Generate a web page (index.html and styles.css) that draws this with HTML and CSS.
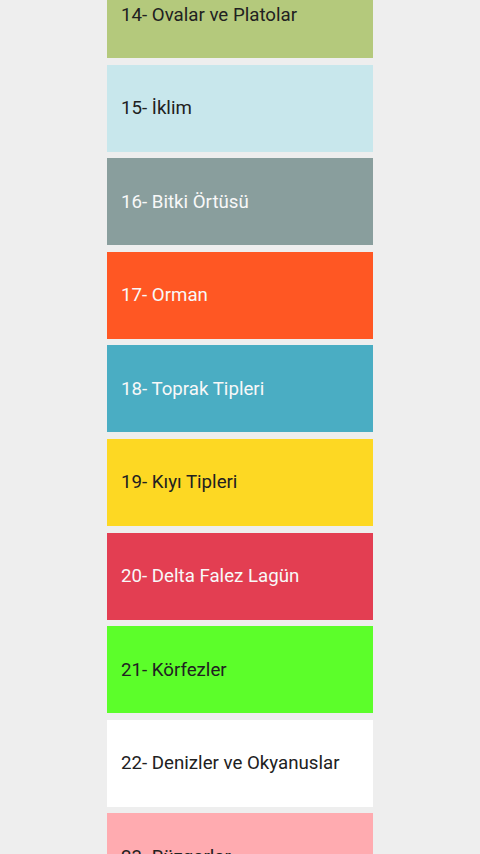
FILE: index.html
```html
<!DOCTYPE html>
<html lang="tr">
<head>
<meta charset="utf-8">
<title>Konular</title>
<link rel="stylesheet" href="styles.css">
</head>
<body>
<div class="list">
  <div class="card c14 dark">14- Ovalar ve Platolar</div>
  <div class="card c15 dark">15- İklim</div>
  <div class="card c16 light">16- Bitki Örtüsü</div>
  <div class="card c17 light">17- Orman</div>
  <div class="card c18 light">18- Toprak Tipleri</div>
  <div class="card c19 dark">19- Kıyı Tipleri</div>
  <div class="card c20 light">20- Delta Falez Lagün</div>
  <div class="card c21 dark">21- Körfezler</div>
  <div class="card c22 dark">22- Denizler ve Okyanuslar</div>
  <div class="card c23 dark">23- Rüzgarlar</div>
</div>
</body>
</html>
```

FILE: styles.css
```css
html, body {
  margin: 0;
  padding: 0;
  background: #eeeeee;
  height: 854px;
  overflow: hidden;
}
.list {
  display: flex;
  flex-direction: column;
  gap: 6.6px;
  width: 266px;
  margin: -29px auto 0 107px;
}
.card {
  height: 87px;
  flex: none;
  display: flex;
  align-items: center;
  padding-left: 14px;
  font-family: Roboto, "Noto Sans", sans-serif;
  font-size: 18.7px;
  box-sizing: border-box;
}
.dark { color: #212121; }
.light { color: #f8f8f8; }
.c14 { background: #b4c97c; }
.c15 { background: #c8e7ec; }
.c16 { background: #899e9d; }
.c17 { background: #ff5723; }
.c18 { background: #4aadc3; }
.c19 { background: #fdd823; }
.c20 { background: #e33e52; }
.c21 { background: #5cfe2a; }
.c22 { background: #ffffff; }
.c23 { background: #ffabb0; }
```
